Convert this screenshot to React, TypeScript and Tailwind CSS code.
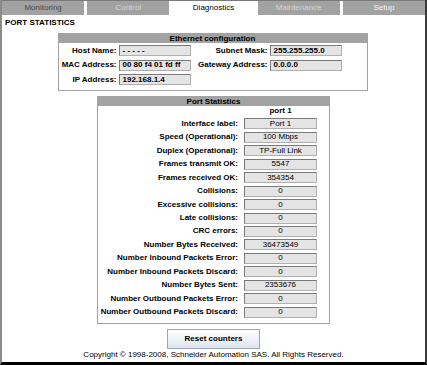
import React from "react";

const font = { fontFamily: '"Liberation Sans", Arial, sans-serif' };

function Field({ value, center }: { value: string; center?: boolean }) {
  return (
    <div
      className={`h-[11px] bg-[#e4e4e4] border border-[#b0b0b0] border-t-[#7a7a7a] border-l-[#7a7a7a] flex items-center text-[8px] leading-none text-black ${center ? "justify-center" : "pl-[3px]"}`}
    >
      {value}
    </div>
  );
}

const tabs = [
  { label: "Monitoring", cls: "bg-[#a2a2a2] text-[#4a4a4a]" },
  { label: "Control", cls: "bg-[#a2a2a2] text-[#d6d6d6]" },
  { label: "Diagnostics", cls: "bg-white text-black" },
  { label: "Maintenance", cls: "bg-[#a2a2a2] text-[#d6d6d6]" },
  { label: "Setup", cls: "bg-[#a2a2a2] text-[#f4f4f4]" },
];

const stats: [string, string][] = [
  ["Interface label:", "Port 1"],
  ["Speed (Operational):", "100 Mbps"],
  ["Duplex (Operational):", "TP-Full Link"],
  ["Frames transmit OK:", "5547"],
  ["Frames received OK:", "354354"],
  ["Collisions:", "0"],
  ["Excessive collisions:", "0"],
  ["Late collisions:", "0"],
  ["CRC errors:", "0"],
  ["Number Bytes Received:", "36473549"],
  ["Number Inbound Packets Error:", "0"],
  ["Number Inbound Packets Discard:", "0"],
  ["Number Bytes Sent:", "2353676"],
  ["Number Outbound Packets Error:", "0"],
  ["Number Outbound Packets Discard:", "0"],
];

export default function App() {
  return (
    <div
      style={font}
      className="w-[427px] h-[365px] bg-white border-l-2 border-l-[#8a8a8a] border-r-2 border-r-[#3a3a3a] border-b-[3px] border-b-black flex flex-col text-black overflow-hidden"
    >
      <div className="shrink-0 flex gap-[3px] h-[15px] border-t border-t-[#7a7a7a]">
        {tabs.map((t) => (
          <div
            key={t.label}
            className={`flex-1 flex items-center justify-center text-[8px] ${t.cls}`}
          >
            {t.label}
          </div>
        ))}
      </div>

      <div className="shrink-0 pl-[3px] pt-[3px] h-[18px] text-[8px] font-bold leading-[10px]">
        PORT STATISTICS
      </div>

      <div className="shrink-0 mx-auto w-[310px] border border-[#a2a2a2] -translate-x-[1px]">
        <div className="h-[9px] bg-[#a2a2a2] flex items-center justify-center text-[8px] font-bold leading-none">
          Ethernet configuration
        </div>
        <div className="grid grid-cols-[58px_72px_75px_72px] gap-x-[2px] gap-y-[3.5px] items-center pt-[2px] pb-[5px] text-[8px] font-bold leading-none">
          <div className="text-right">Host Name:</div>
          <Field value="- - - - -" />
          <div className="text-right">Subnet Mask:</div>
          <Field value="255.255.255.0" />
          <div className="text-right">MAC Address:</div>
          <Field value="00 80 f4 01 fd ff" />
          <div className="text-right">Gateway Address:</div>
          <Field value="0.0.0.0" />
          <div className="text-right">IP Address:</div>
          <Field value="192.168.1.4" />
        </div>
      </div>

      <div className="shrink-0 mx-auto mt-[5px] w-[233px] border border-[#a2a2a2]">
        <div className="h-[9px] bg-[#a2a2a2] flex items-center justify-center text-[8px] font-bold leading-none">
          Port Statistics
        </div>
        <div className="grid grid-cols-[140px_73px] gap-x-[6px] gap-y-[2.45px] items-center pb-[5px] text-[8px] font-bold leading-none">
          <div className="h-[10px]" />
          <div className="h-[10px] flex items-center justify-center">port 1</div>
          {stats.map(([l, v]) => (
            <React.Fragment key={l}>
              <div className="text-right whitespace-nowrap">{l}</div>
              <div className="font-normal">
                <Field value={v} center />
              </div>
            </React.Fragment>
          ))}
        </div>
      </div>

      <div className="shrink-0 flex justify-center mt-[5px]">
        <button
          style={font}
          className="w-[93px] h-[20px] border border-[#9aa6b6] bg-gradient-to-b from-white to-[#dfe4ec] text-[8px] font-bold text-black"
        >
          Reset counters
        </button>
      </div>
      <div className="shrink-0 text-center text-[8px] leading-[10px] mt-[1px]">
        Copyright © 1998-2008, Schneider Automation SAS. All Rights Reserved.
      </div>
    </div>
  );
}
